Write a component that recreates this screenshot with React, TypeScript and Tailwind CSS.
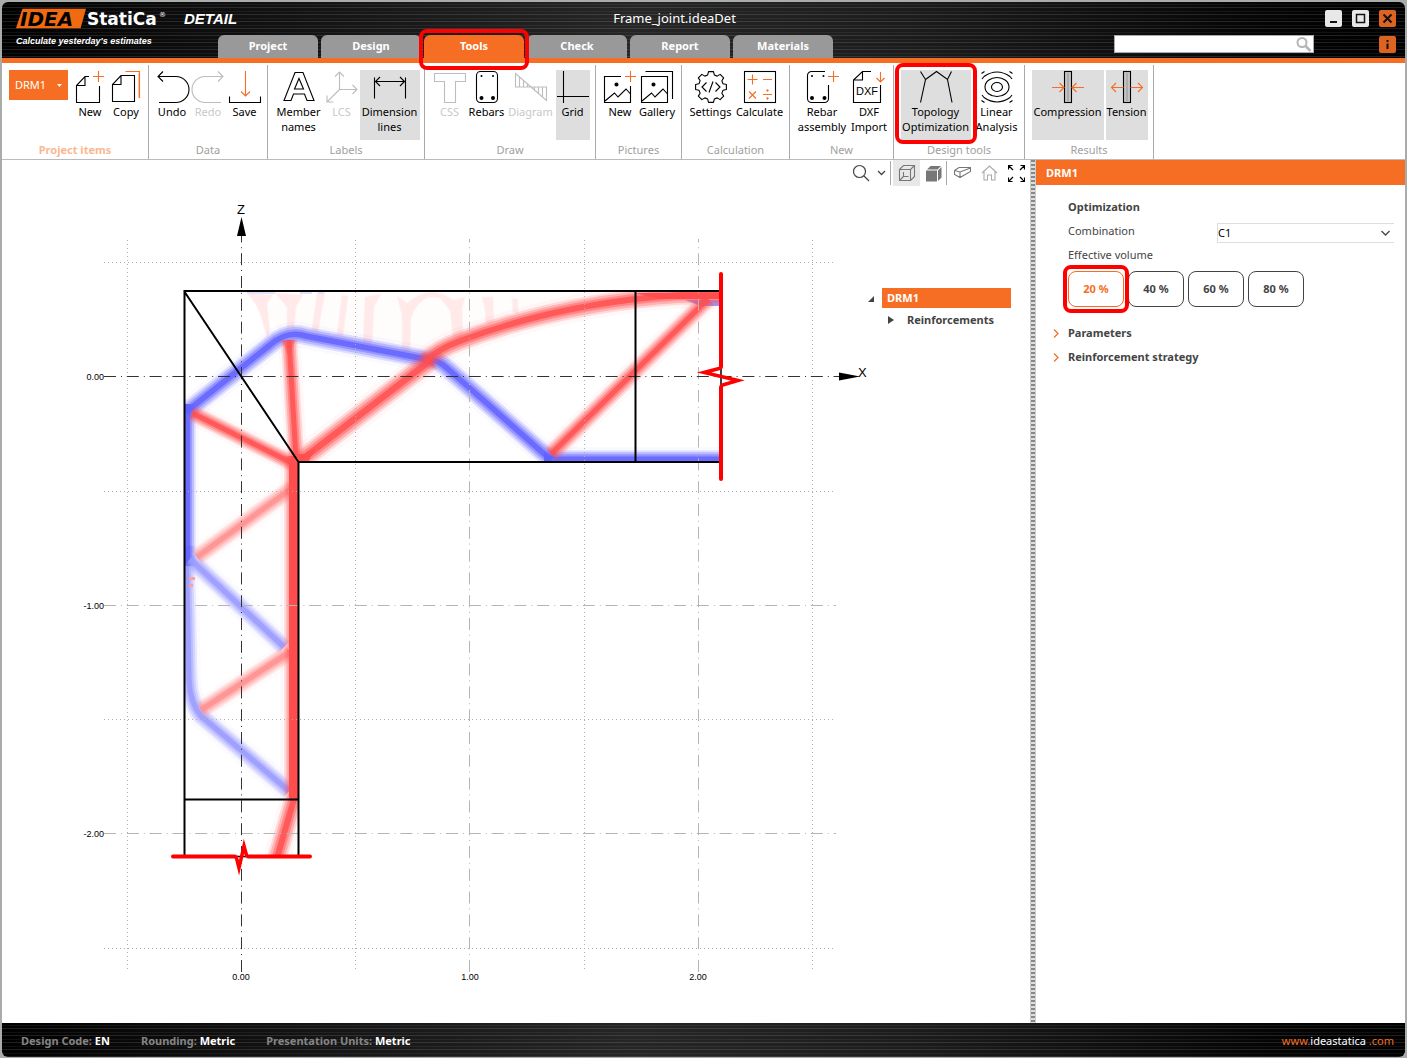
import { useState } from 'react';
import type { ReactNode } from 'react';
import clsx from 'clsx';

const TABS = ['Project', 'Design', 'Tools', 'Check', 'Report', 'Materials'];
const VOLUMES = ['20 %', '40 %', '60 %', '80 %'];

const ORANGE = '#f56e23';
const RED = '#ff4d4d';
const LIGHT_RED = '#ff8f8f';
const BLUE = '#6060ff';
const LIGHT_BLUE = '#9a9aff';

const BRUSHED =
  'bg-[repeating-linear-gradient(180deg,transparent_0px,transparent_2px,rgba(255,255,255,0.06)_2px,rgba(255,255,255,0.06)_3px,transparent_3px,transparent_5px,rgba(255,255,255,0.12)_5px,rgba(255,255,255,0.12)_6px,transparent_6px,transparent_7px),linear-gradient(90deg,#000_0%,#0c0c0c_12%,#262626_45%,#1c1c1c_65%,#050505_90%,#000_100%)]';

interface IcoProps {
  children: ReactNode;
  color?: string;
}

function Ico({ children, color = '#000' }: IcoProps) {
  return (
    <svg width="32" height="32" viewBox="0 0 32 32" fill="none" stroke={color} strokeWidth="1.1" className="shrink-0 overflow-visible" aria-hidden="true">
      {children}
    </svg>
  );
}

// Eight-toothed cog outline around (16, 16)
const gearPath = () => {
  const pts: string[] = [];
  for (let i = 0; i < 8; i++) {
    const a = (i * Math.PI) / 4;
    [
      [-0.27, 12.5],
      [-0.16, 15.6],
      [0.16, 15.6],
      [0.27, 12.5],
    ].forEach(([d, r]) => {
      pts.push(`${(16 + r * Math.sin(a + d)).toFixed(2)} ${(16 - r * Math.cos(a + d)).toFixed(2)}`);
    });
  }
  return `M${pts.join('L')}Z`;
};

const icons = {
  newDoc: (
    <Ico>
      <path d="M25.5 15v16.5h-23v-17l8.5-9H15M11 5.5v9H2.5" />
      <path d="M24.5 0v11M19 5.5h11" stroke={ORANGE} />
    </Ico>
  ),
  copy: (
    <Ico>
      <path d="M2.5 13.5v17h22v-26H11zM11 4.5v9H2.5" />
      <path d="M15.5 .5H29.5V27" stroke={ORANGE} />
      <path d="M28.5 2v25" stroke="#fbc3a4" />
    </Ico>
  ),
  undo: (
    <Ico>
      <path d="M3 31.5h17a13 13 0 0 0 0-26H2M7 .5l-5 5 5 5" />
    </Ico>
  ),
  redo: (
    <Ico color="#bdbdbd">
      <path d="M29 31.5H13a13 13 0 0 1 0-26h18M26 .5l5 5-5 5" />
    </Ico>
  ),
  save: (
    <Ico>
      <path d="M.5 25.5v6h31v-6" />
      <path d="M16.5 0v25M12 20.5l4.5 4.5 4.5-4.5" stroke={ORANGE} />
    </Ico>
  ),
  names: (
    <Ico>
      <path d="M1 29.5L12 1.500h8l11 28h-7l-2.5-6.500h-11L8 29.500zM11.5 18L16 7.500 20.500 18z" />
    </Ico>
  ),
  lcs: (
    <Ico color="#bdbdbd">
      <path d="M13.5 1v17.5H31M13.5 18.500L1 31M9 5.500L13.500 1 18 5.500M26.500 14l4.500 4.500-4.500 4.500M1 24.500V31h6.500" />
    </Ico>
  ),
  dimension: (
    <Ico>
      <path d="M.5 6.500v21M31.500 6.500v21M1 10.500h30M6 6l-4.500 4.500L6 15M26 6l4.500 4.500L26 15" />
    </Ico>
  ),
  css: (
    <Ico color="#bdbdbd">
      <path d="M.5 2.500h31v8H21.500v21h-11v-21H.5z" />
    </Ico>
  ),
  rebars: (
    <Ico>
      <rect x="5.5" y=".5" width="21" height="31" rx="4" />
      <g fill="#000" stroke="none">
        <circle cx="10.5" cy="5" r="1" />
        <circle cx="22" cy="5" r="1" />
        <circle cx="10.5" cy="27" r="2" />
        <circle cx="22" cy="27" r="2" />
      </g>
    </Ico>
  ),
  diagram: (
    <Ico color="#bdbdbd">
      <path d="M.5 2.500V16h31v13.500zM4.500 6v10M8.500 9.500V16M12.500 13v3M19.500 16v3M23.500 16v6.500M27.500 16v10" />
    </Ico>
  ),
  grid: (
    <Ico>
      <path d="M6.500 0v32M0 25.500h32" />
    </Ico>
  ),
  picture: (
    <Ico>
      <path d="M17 5.500H.5v26h26V15M1 30l9.500-8 3.500 4 8-8 4.500 5" />
      <circle cx="12.5" cy="13.5" r="1.5" fill="#000" />
      <path d="M26.500 0v11M21 5.500h11" stroke={ORANGE} />
    </Ico>
  ),
  gallery: (
    <Ico>
      <path d="M.5 5.500h26v26H.5zM1 30l9.500-8 3.500 4 8-8 4.500 5M4.500 .5h27V28" />
      <circle cx="12.5" cy="13.5" r="1.5" fill="#000" />
    </Ico>
  ),
  settings: (
    <Ico>
      <path d={gearPath()} strokeLinejoin="round" />
      <path d="M11.500 11.500L7 16l4.500 4.500M20.500 11.500L25 16l-4.500 4.500M18 10.500l-4 11" />
    </Ico>
  ),
  calculate: (
    <Ico>
      <rect x=".5" y=".5" width="31" height="31" />
      <g stroke={ORANGE}>
        <path d="M3.500 8.500h10M8.500 3.500v10M19 8.500h9M5 20.500l7 7M12 20.500l-7 7M19 23.500h9" />
        <circle cx="23.5" cy="19.5" r=".6" fill={ORANGE} />
        <circle cx="23.5" cy="27.5" r=".6" fill={ORANGE} />
      </g>
    </Ico>
  ),
  rebarAssembly: (
    <Ico>
      <path d="M19 .5H5.500a4 4 0 0 0-4 4v23a4 4 0 0 0 4 4h13a4 4 0 0 0 4-4V14" />
      <g fill="#000" stroke="none">
        <circle cx="6" cy="5" r="1" />
        <circle cx="17.5" cy="5" r="1" />
        <circle cx="6" cy="27" r="2" />
        <circle cx="18.5" cy="27" r="2" />
      </g>
      <path d="M27.500 0v11M22 5.500h11" stroke={ORANGE} />
    </Ico>
  ),
  dxf: (
    <Ico>
      <path d="M18 .5H9.500l-9 8.500v22.500h27V14M9.500 .5V9H.5" />
      <text x="14" y="24" textAnchor="middle" fontSize="11" fill="#000" stroke="none" className="font-['Liberation_Sans_Narrow','Liberation_Sans',sans-serif]">
        DXF
      </text>
      <path d="M27.500 1v10M23.500 7l4 4 4-4" stroke={ORANGE} />
    </Ico>
  ),
  topology: (
    <Ico>
      <path d="M.5 .5l5 8-5 23M5.500 8.500l11-8 11 8 4-8M27.500 8.500l4.500 23" />
    </Ico>
  ),
  linear: (
    <Ico>
      <ellipse cx="16" cy="16" rx="5.500" ry="4.500" />
      <ellipse cx="16" cy="16" rx="12" ry="9.500" />
      <path d="M3 5.500Q16-3.500 29 5.500M3 26.500Q16 35.500 29 26.500M3 5.500L1 8M29 5.500L31 8M3 26.500L1 24M29 26.500L31 24" />
      <path d="M.5 2.500l3-2M31.500 2.500l-3-2M.5 29.500l3 2M31.500 29.500l-3 2" />
    </Ico>
  ),
  compression: (
    <Ico>
      <rect x="12.5" y=".5" width="7" height="31" fill="#c4c4c4" />
      <path d="M16 2v28" stroke="#999" />
      <path d="M0 16.500h12M7.500 12l4.500 4.500-4.500 4.500M32 16.500H20M24.500 12L20 16.500l4.500 4.500" stroke={ORANGE} />
    </Ico>
  ),
  tension: (
    <Ico>
      <rect x="12.5" y=".5" width="7" height="31" fill="#c4c4c4" />
      <path d="M16 2v28" stroke="#999" />
      <path d="M.5 16.500h12M5 12L.5 16.500 5 21M31.500 16.500h-12M27 12l4.500 4.500L27 21" stroke={ORANGE} />
    </Ico>
  ),
};

interface Tool {
  label: string;
  icon: ReactNode;
  width: string;
  active?: boolean;
  disabled?: boolean;
  marked?: boolean;
}

interface Group {
  title: string;
  width: string;
  row?: string;
  tools: Tool[];
}

const GROUPS: Group[] = [
  {
    title: 'Data',
    width: 'w-[119px]',
    row: 'pl-px',
    tools: [
      { label: 'Undo', icon: icons.undo, width: 'w-9' },
      { label: 'Redo', icon: icons.redo, width: 'w-9', disabled: true },
      { label: 'Save', icon: icons.save, width: 'w-[37px]' },
    ],
  },
  {
    title: 'Labels',
    width: 'w-[157px]',
    row: 'pl-px',
    tools: [
      { label: 'Member\nnames', icon: icons.names, width: 'w-[50px]' },
      { label: 'LCS', icon: icons.lcs, width: 'w-9', disabled: true },
      { label: 'Dimension\nlines', icon: icons.dimension, width: 'w-[60px]', active: true },
    ],
  },
  {
    title: 'Draw',
    width: 'w-[171px]',
    row: 'pl-px',
    tools: [
      { label: 'CSS', icon: icons.css, width: 'w-9', disabled: true },
      { label: 'Rebars', icon: icons.rebars, width: 'w-[38px]' },
      { label: 'Diagram', icon: icons.diagram, width: 'w-[50px]', disabled: true },
      { label: 'Grid', icon: icons.grid, width: 'w-[34px]', active: true },
    ],
  },
  {
    title: 'Pictures',
    width: 'w-[86px]',
    tools: [
      { label: 'New', icon: icons.picture, width: 'w-[37px]' },
      { label: 'Gallery', icon: icons.gallery, width: 'w-[37px]' },
    ],
  },
  {
    title: 'Calculation',
    width: 'w-[108px]',
    tools: [
      { label: 'Settings', icon: icons.settings, width: 'w-12' },
      { label: 'Calculate', icon: icons.calculate, width: 'w-[50px]' },
    ],
  },
  {
    title: 'New',
    width: 'w-[104px]',
    row: 'pl-1',
    tools: [
      { label: 'Rebar\nassembly', icon: icons.rebarAssembly, width: 'w-[51px]' },
      { label: 'DXF\nImport', icon: icons.dxf, width: 'w-[43px]' },
    ],
  },
  {
    title: 'Design tools',
    width: 'w-[131px]',
    row: 'gap-1 pl-px',
    tools: [
      { label: 'Topology\nOptimization', icon: icons.topology, width: 'w-[70px]', active: true, marked: true },
      { label: 'Linear\nAnalysis', icon: icons.linear, width: 'w-11' },
    ],
  },
  {
    title: 'Results',
    width: 'w-[129px]',
    row: 'gap-[2px] pl-px',
    tools: [
      { label: 'Compression', icon: icons.compression, width: 'w-[72px]', active: true },
      { label: 'Tension', icon: icons.tension, width: 'w-[42px]', active: true },
    ],
  },
];

function ToolButton({ label, icon, width, active, disabled, marked }: Tool) {
  return (
    <button
      type="button"
      disabled={disabled}
      aria-pressed={active}
      className={clsx(
        'relative flex h-[70px] shrink-0 flex-col items-center pt-px whitespace-pre leading-[15px]',
        width,
        active && 'bg-[#dedede]',
        disabled ? 'text-[#c8c8c8]' : 'text-black'
      )}
    >
      {icon}
      <span className="mt-px">{label}</span>
      {marked && <span className="absolute -inset-x-[6px] -top-[7px] -bottom-[4px] z-10 rounded-lg border-4 border-[#ff0000]" />}
    </button>
  );
}

function Logo() {
  return (
    <svg width="242" height="56" viewBox="0 0 242 56" className="block max-w-none font-['DejaVu_Sans',sans-serif]" role="img" aria-label="IDEA StatiCa Detail">
      <path d="M21 7.500H83L78 25.500H15z" fill="#f06a10" />
      <text x="18" y="24" fontSize="20" fontWeight="bold" fontStyle="italic" fill="#000">
        IDEA
      </text>
      <path d="M21 7.500H83L78 25.500H15z" fill="none" stroke="#f06a10" strokeWidth="1.5" />
      <text x="85" y="23" fontSize="17" fontWeight="bold" fill="#fff">
        StatiCa
      </text>
      <text x="157" y="15" fontSize="7" fill="#fff">
        ®
      </text>
      <text x="182" y="22" fontSize="15" fontWeight="bold" fontStyle="italic" fill="#fff" className="font-['Liberation_Sans',sans-serif]">
        DETAIL
      </text>
      <text x="14" y="42" fontSize="9" fontWeight="bold" fontStyle="italic" fill="#fff" className="font-['Liberation_Sans',sans-serif]">
        Calculate yesterday's estimates
      </text>
    </svg>
  );
}

function TitleBar({ tab, onTab }: { tab: string; onTab: (t: string) => void }) {
  return (
    <header className={clsx('flex h-14 items-stretch rounded-t-md', BRUSHED)}>
      <div className="w-[216px] shrink-0">
        <Logo />
      </div>
      <div className="flex min-w-0 flex-1 flex-col justify-between">
        <h1 className="pt-[7px] pl-[17px] text-center text-[13px] leading-[18px] text-white">Frame_joint.ideaDet</h1>
        <nav className="flex gap-[3px]">
          {TABS.map((t) => (
            <button
              key={t}
              type="button"
              onClick={() => onTab(t)}
              className={clsx(
                'relative h-[23px] w-[100px] rounded-t-md text-center font-bold text-white',
                t === tab ? 'bg-[#f56e23]' : 'bg-[#999]'
              )}
            >
              {t}
              {t === 'Tools' && <span className="absolute -inset-x-[5px] -top-[6px] -bottom-[12px] z-10 rounded-lg border-4 border-[#ff0000]" />}
            </button>
          ))}
        </nav>
      </div>
      <div className="flex w-[291px] shrink-0 flex-col gap-2 pt-2 pr-[9px]">
        <div className="flex justify-end gap-[10px]">
          <button type="button" aria-label="Minimize" className="flex size-[17px] items-center justify-center rounded-xs bg-[#e8e8e8]">
            <svg width="17" height="17" stroke="#111" strokeWidth="2"><path d="M5 12h7" /></svg>
          </button>
          <button type="button" aria-label="Maximize" className="flex size-[17px] items-center justify-center rounded-xs bg-[#e8e8e8]">
            <svg width="17" height="17" fill="none" stroke="#111" strokeWidth="1.5"><rect x="4.5" y="4.5" width="8" height="8" /></svg>
          </button>
          <button type="button" aria-label="Close" className="flex size-[17px] items-center justify-center rounded-xs bg-[#dc6420]">
            <svg width="17" height="17" stroke="#111" strokeWidth="2"><path d="M4.500 4.500l8 8M12.500 4.500l-8 8" /></svg>
          </button>
        </div>
        <div className="flex items-center justify-between">
          <div className="flex h-[18px] w-[200px] items-center border border-[#aaa] bg-white">
            <input type="text" aria-label="Search" className="h-full min-w-0 flex-1 px-1 outline-none" />
            <svg width="20" height="16" fill="none" stroke="#b5b5b5" strokeWidth="2"><circle cx="9" cy="6.5" r="4.5" /><path d="M12.500 10l5 5" strokeWidth="2.5" /></svg>
          </div>
          <button type="button" aria-label="Info" className="flex size-[17px] items-center justify-center rounded-xs bg-[#dc6420]">
            <svg width="17" height="17" stroke="#111" strokeWidth="2"><path d="M8.500 4v2M8.500 7.500V13" /></svg>
          </button>
        </div>
      </div>
    </header>
  );
}

function Ribbon() {
  return (
    <div className="flex h-[97px] border-b border-[#bbb] pt-[2px]">
      <section className="flex w-[147px] shrink-0 flex-col border-r border-[#aaa] pt-[5px]">
        <div className="flex pl-[7px]">
          <button type="button" className="flex h-[30px] w-[59px] items-center justify-between bg-[#f56e23] px-[6px] text-white">
            DRM1
            <svg width="5" height="3" fill="#fff"><path d="M0 0h5L2.500 3z" /></svg>
          </button>
          <div className="flex pl-1">
            <ToolButton label="New" icon={icons.newDoc} width="w-9" />
            <ToolButton label="Copy" icon={icons.copy} width="w-9" />
          </div>
        </div>
        <h2 className="mt-[2px] text-center leading-4 font-bold text-[#f9b892]">Project items</h2>
      </section>
      {GROUPS.map((g) => (
        <section key={g.title} className={clsx('flex shrink-0 flex-col border-r border-[#aaa] pt-[5px]', g.width)}>
          <div className={clsx('flex justify-center', g.row)}>
            {g.tools.map((t) => (
              <ToolButton key={t.label} {...t} />
            ))}
          </div>
          <h2 className="mt-[2px] text-center leading-4 text-[#a0a0a0]">{g.title}</h2>
        </section>
      ))}
    </div>
  );
}

function ViewBar() {
  return (
    <div className="flex h-[26px] items-center justify-end">
      <button type="button" aria-label="Zoom" className="flex w-6 justify-center">
        <svg width="18" height="18" fill="none" stroke="#444" strokeWidth="1.2"><circle cx="7.5" cy="7.5" r="6" /><path d="M12 12l5 5" /></svg>
      </button>
      <button type="button" aria-label="Zoom options" className="flex w-[17px] justify-center">
        <svg width="9" height="6" fill="none" stroke="#444" strokeWidth="1.3"><path d="M1 1l3.500 3.500L8 1" /></svg>
      </button>
      <span className="mr-[2px] h-6 w-px bg-[#aaa]" />
      <button type="button" aria-label="Wireframe" className="flex h-[26px] w-[27px] items-center justify-center bg-[#e8e8e8]">
        <svg width="18" height="18" fill="none" stroke="#777" strokeWidth="1.1"><path d="M1.500 5.500h11v11h-11zM1.500 5.500l4-4h11v11l-4 4M12.500 5.500l4-4M5.500 8v4.500h5M5.500 12.500l-4 4" /></svg>
      </button>
      <button type="button" aria-label="Solid" className="flex w-[26px] justify-center">
        <svg width="17" height="17" fill="#777"><path d="M1 5.500h11v11H1zM2 4.500L5.500 1H16l-3.500 3.500zM13 5.500L16.500 2v10.500l-3.500 3.500z" /></svg>
      </button>
      <span className="mr-[2px] h-6 w-px bg-[#aaa]" />
      <button type="button" aria-label="Perspective" className="flex w-[27px] justify-center">
        <svg width="17" height="14" fill="none" stroke="#777" strokeWidth="1.1"><path d="M.5 4.500L5 1.500h11.500v4L6 11.500.5 8.500zM.5 4.500L6 6l10.500-4M6 6v5.500" /></svg>
      </button>
      <button type="button" aria-label="Home view" className="flex w-[27px] justify-center">
        <svg width="17" height="16" fill="none" stroke="#aaa" strokeWidth="1.1"><path d="M1 8l7.500-7L16 8M3 6.500v8.500h3.500v-5h4v5H14V6.500" /></svg>
      </button>
      <button type="button" aria-label="Fit all" className="flex w-[27px] justify-center">
        <svg width="17" height="17" fill="none" stroke="#000" strokeWidth="1.2"><path d="M.5 4.500v-4h4M.5 .5L5 5M12.500 .5h4v4M16.500 .5L12 5M.5 12.500v4h4M.5 16.500L5 12M12.500 16.500h4v-4M16.500 16.500L12 12" /></svg>
      </button>
    </div>
  );
}

interface BandProps {
  d: string;
  color: string;
  width: number;
}

// A stress band: solid core fading out in steps towards both edges
function Band({ d, color, width }: BandProps) {
  return (
    <g fill="none" stroke={color} strokeLinejoin="round">
      <path d={d} strokeWidth={width * 1.6} opacity="0.04" />
      <path d={d} strokeWidth={width * 1.15} opacity="0.18" />
      <path d={d} strokeWidth={width * 0.9} opacity="0.28" />
      <path d={d} strokeWidth={width * 0.62} opacity="0.42" />
      <path d={d} strokeWidth={width * 0.35} opacity="0.8" />
    </g>
  );
}

function Drawing() {
  return (
    <svg className="h-full min-w-0 flex-1 font-['Liberation_Sans',sans-serif]" role="img" aria-label="Topology optimization of the frame joint">
      <defs>
        <clipPath id="frame">
          <path d="M184 291H721V462H298V856H184z" />
        </clipPath>
      </defs>
      <g transform="translate(-2 -186)">
        <g clipPath="url(#frame)">
          <path d="M245 291H600Q500 315 433 355L280 330z" fill="#fffcfc" />
          <g fill="#ffe9e9" stroke="#fff3f3">
            <path d="M247 293L273 295 267 303 270 332 267 337 260 313 255 303z" />
            <path d="M275 293L303 295 296 307 294 328H287V307z" />
            <path d="M317 293H325L318 332 312 330z" />
            <path d="M342 295L348 296 343 336 337 335z" />
            <path d="M365 297L381 294 374 307 372 345 363 343z" />
            <path d="M397 296L407 303Q420 292 434 292L445 295 453 300 465 297 462 308 463 335 453 338 450 310 440 298 428 297Q415 304 411 318L410 352H402V315z" />
            <path d="M482 297H493L494 322 486 324 485 310z" />
            <path d="M512 298L518 299V314L513 312z" />
          </g>
          <path d="M247 292.500H275M300 292.500h12M318 292.500h6" stroke="#dfe2ff" strokeWidth="3" />

          <Band d="M186 546L189 680Q190 703 201 716L289 791" color={LIGHT_BLUE} width={15} />
          <Band d="M187.500 404V566" color={BLUE} width={14} />
          <Band d="M190 559L284 647" color={LIGHT_BLUE} width={15} />
          <Band d="M186 412L270 345Q287 330 306 336L425 359Q438 359 448 369L551 460" color={BLUE} width={16} />
          <Band d="M544 459H721" color={BLUE} width={15} />
          <path d="M685 300h36v6h-20z" fill={LIGHT_BLUE} />

          <Band d="M197 557L292 488" color={LIGHT_RED} width={15} />
          <Band d="M201 710L290 652" color={LIGHT_RED} width={15} />
          <path d="M189 577h6v3h-6zM189 584h4v3h-4z" fill="#ffa0a0" />
          <Band d="M192 413L294 464" color={RED} width={14} />
          <Band d="M289 340L296 458" color={RED} width={14} />
          <path d="M282 340h13l-4 14h-4z" fill={RED} opacity="0.35" />
          <Band d="M300 461L431 360" color={RED} width={18} />
          <Band d="M426 361Q438 349 460 341Q560 303 680 295H721" color={RED} width={17} />
          <Band d="M551 454L708 299" color={RED} width={15} />
          <Band d="M294 456V799L277 858" color={RED} width={17} />
          <path d="M289 462h9v337h-9zM635 293h86v6H660z" fill={RED} />
          <path d="M282 462h16v-8h6l12-6-8 14z" fill={RED} opacity="0.8" />
        </g>

        <g stroke="#b0b0b0" strokeDasharray="1 3" fill="none">
          <path d="M127.500 240V972M355.500 240V972M584.500 240V972M812.500 240V972" />
          <path d="M104 262.500H836M104 491.500H836M104 719.500H836M104 948.500H836" />
        </g>
        <g stroke="#b5b5b5" strokeDasharray="12 5 1 4.8" fill="none">
          <path d="M469.500 972V239M698.500 972V239M104 605.500H836M104 833.500H836" />
        </g>
        <g stroke="#333" strokeDasharray="12 5 1 4.8" fill="none">
          <path d="M241.500 972V236M104 376.500H840" />
        </g>
        <path d="M241.500 217l4.500 19h-9zM860 376.500l-21-4v8z" />

        <g fill="none" stroke="#000" strokeWidth="2">
          <path d="M184.500 856V291H721M721 462H298.500V856M184 291L298.500 462M635.500 291V463M184 799.500H299" />
          <path d="M721 366v22M232 856.500h20" strokeWidth="1.5" />
        </g>
        <g fill="none" stroke="#ff0000" strokeWidth="4" strokeLinecap="round">
          <path d="M721 274V367M721 387V479M173 856.500H235M248 856.500H310" />
        </g>
        <g fill="none" stroke="#ff0000" strokeWidth="3.5">
          <path d="M721 368L704 372.500 738 380.500 721 385.500M236 856L239 868 244 846 247 857" strokeMiterlimit="12" />
        </g>

        <g fontSize="9">
          <g textAnchor="end">
            <text x="104" y="380">0.00</text>
            <text x="104" y="609">-1.00</text>
            <text x="104" y="837">-2.00</text>
          </g>
          <g textAnchor="middle">
            <text x="241" y="980">0.00</text>
            <text x="470" y="980">1.00</text>
            <text x="698" y="980">2.00</text>
          </g>
        </g>
        <g fontSize="13">
          <text x="237" y="214">Z</text>
          <text x="858" y="377">X</text>
        </g>
      </g>
    </svg>
  );
}

function Tree() {
  return (
    <ul className="w-[162px] shrink-0 pt-[102px] pr-[19px] font-bold">
      <li>
        <div className="flex items-center">
          <svg width="14" height="20" fill="#444" className="shrink-0"><path d="M6 14V8L0 14z" /></svg>
          <button type="button" className="h-5 flex-1 bg-[#f56e23] pl-[5px] text-left text-white">DRM1</button>
        </div>
        <ul>
          <li className="flex h-6 items-center gap-[13px] pl-5 text-[#444]">
            <svg width="6" height="8" fill="#444"><path d="M0 0l6 4-6 4z" /></svg>
            Reinforcements
          </li>
        </ul>
      </li>
    </ul>
  );
}

function SidePanel() {
  const [volume, setVolume] = useState('20 %');

  return (
    <aside className="w-[369px] shrink-0 text-[#444]">
      <h2 className="h-[25px] bg-[#f56e23] pl-[10px] leading-[25px] font-bold text-white">DRM1</h2>
      <div className="pt-[10px] pr-[11px] pl-8">
        <h3 className="h-6 leading-6 font-bold">Optimization</h3>
        <div className="flex h-6 items-center">
          <label htmlFor="combination" className="w-[149px] shrink-0">Combination</label>
          <div className="relative mt-1 flex-1">
            <select id="combination" className="block h-5 w-full appearance-none border-y border-l border-[#ddd] bg-white text-black">
              <option>C1</option>
            </select>
            <svg width="9" height="6" fill="none" stroke="#444" strokeWidth="1.3" className="pointer-events-none absolute top-[7px] right-1"><path d="M.5 1l4 4 4-4" /></svg>
          </div>
        </div>
        <p className="h-6 leading-6">Effective volume</p>
        <div className="mt-1 flex gap-1">
          {VOLUMES.map((v) => (
            <button
              key={v}
              type="button"
              onClick={() => setVolume(v)}
              className={clsx(
                'relative h-9 w-14 rounded-lg border font-bold',
                v === volume ? 'border-[#f56e23] text-[#f56e23]' : 'border-[#444]'
              )}
            >
              {v}
              {v === '20 %' && <span className="absolute -inset-x-[6px] -inset-y-[7px] z-10 rounded-lg border-4 border-[#ff0000]" />}
            </button>
          ))}
        </div>
      </div>
      <div className="flex flex-col pt-[14px] pl-[17px]">
        {['Parameters', 'Reinforcement strategy'].map((s) => (
          <button key={s} type="button" className="flex h-6 items-center gap-[9px] text-left font-bold">
            <svg width="6" height="9" fill="none" stroke={ORANGE} strokeWidth="1.2"><path d="M1 .5l4 4-4 4" /></svg>
            {s}
          </button>
        ))}
      </div>
    </aside>
  );
}

function StatusBar() {
  const items = [
    ['Design Code:', 'EN'],
    ['Rounding:', 'Metric'],
    ['Presentation Units:', 'Metric'],
  ];
  return (
    <footer className={clsx('flex h-[34px] items-center justify-between rounded-b-md pt-[2px] pr-[11px] pl-[19px]', BRUSHED)}>
      <div className="flex gap-[31px] font-bold text-[#858585]">
        {items.map(([k, v]) => (
          <span key={k}>
            {k} <span className="text-white">{v}</span>
          </span>
        ))}
      </div>
      <a href="#ideastatica" className="text-[#f56e23]">
        www.<span className="text-white">ideastatica</span> .com
      </a>
    </footer>
  );
}

export default function App() {
  const [tab, setTab] = useState('Tools');

  return (
    <div className="flex min-h-screen flex-col border border-[#a8adab] bg-[#a8adab] px-px pt-px font-['Noto_Sans',sans-serif] text-[11px]">
      <TitleBar tab={tab} onTab={setTab} />
      <div className="h-[5px] bg-[#f56e23]" />
      <div className="flex flex-1 flex-col bg-white">
        <Ribbon />
        <main className="flex flex-1">
          <section className="flex min-w-0 flex-1 flex-col">
            <ViewBar />
            <div className="flex flex-1">
              <Drawing />
              <Tree />
            </div>
          </section>
          <div className="w-[6px] shrink-0 border-x border-[#ccc] bg-[repeating-linear-gradient(180deg,#888_0px,#888_2px,#ddd_2px,#ddd_4px)]" />
          <SidePanel />
        </main>
      </div>
      <StatusBar />
    </div>
  );
}
